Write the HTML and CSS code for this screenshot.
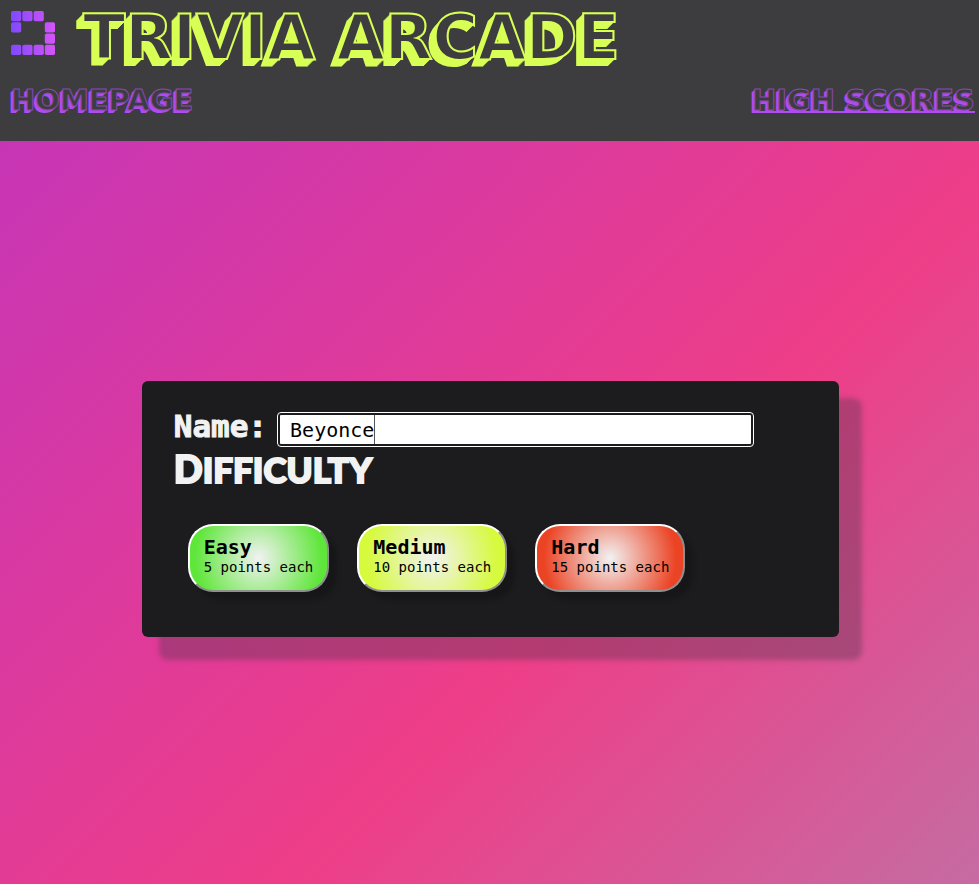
FILE: index.html
```html
<!DOCTYPE html>
<html lang="en">
<head>
<meta charset="utf-8">
<title>Trivia Arcade</title>
<link rel="stylesheet" href="styles.css">
</head>
<body>
<header class="header">
  <div class="brand">
    <svg class="logo" viewBox="0 0 44 44" aria-hidden="true">
      <defs>
        <linearGradient id="violet" gradientUnits="userSpaceOnUse" x1="0" y1="0" x2="44" y2="0">
          <stop offset="0" stop-color="#7f49ff"/>
          <stop offset="1" stop-color="#d654f8"/>
        </linearGradient>
      </defs>
      <g fill="url(#violet)">
        <rect x="0" y="0" width="10.2" height="10.2" rx="1.8"/>
        <rect x="11.3" y="0" width="10.2" height="10.2" rx="1.8"/>
        <rect x="22.6" y="0" width="10.2" height="10.2" rx="1.8"/>
        <rect x="0" y="11.3" width="10.2" height="10.2" rx="1.8"/>
        <rect x="33.8" y="11.3" width="10.2" height="10.2" rx="1.8"/>
        <rect x="33.8" y="22.6" width="10.2" height="10.2" rx="1.8"/>
        <rect x="0" y="33.8" width="10.2" height="10.2" rx="1.8"/>
        <rect x="11.3" y="33.8" width="10.2" height="10.2" rx="1.8"/>
        <rect x="22.6" y="33.8" width="10.2" height="10.2" rx="1.8"/>
        <rect x="33.8" y="33.8" width="10.2" height="10.2" rx="1.8"/>
      </g>
    </svg>
    <h1 class="title">TRIVIA ARCADE</h1>
  </div>
  <nav class="nav">
    <a class="nav-link" href="#home">HOMEPAGE</a>
    <a class="nav-link nav-link-active" href="#scores">HIGH SCORES</a>
  </nav>
</header>
<main class="main">
  <form class="card">
    <div class="field">
      <label class="label" for="name">Name:</label>
      <input class="input" id="name" type="text" value="Beyonce" autocomplete="off">
    </div>
    <h2 class="heading">Difficulty</h2>
    <div class="levels">
      <button class="level easy" type="button"><strong class="level-name">Easy</strong>5 points each</button>
      <button class="level medium" type="button"><strong class="level-name">Medium</strong>10 points each</button>
      <button class="level hard" type="button"><strong class="level-name">Hard</strong>15 points each</button>
    </div>
  </form>
</main>
</body>
</html>
```
FILE: styles.css
```css
* {
  box-sizing: border-box;
}

body {
  margin: 0;
  min-height: 100vh;
  display: flex;
  flex-direction: column;
  font-family: "DejaVu Sans Mono", monospace;
}

.header {
  background: #3d3d3f;
  padding: 8px 4px 25px 11px;
}

.brand {
  display: flex;
  align-items: flex-start;
  gap: 28px;
}

.logo {
  width: 44px;
  height: 44px;
  margin-top: 3px;
}

.title {
  margin: 0;
  color: #3d3d3f;
  font: bold 62px/60px "DejaVu Sans", sans-serif;
  white-space: nowrap;
  -webkit-text-stroke: 2px #d8ff55;
  text-shadow:
    -1px 1px #d8ff55, -2px 2px #d8ff55, -3px 3px #d8ff55,
    -4px 4px #d8ff55, -5px 5px #d8ff55, -6px 6px #d8ff55,
    -7px 7px #d8ff55;
}

.nav {
  display: flex;
  justify-content: space-between;
  margin-top: 16px;
}

.nav-link {
  color: #3d3d3f;
  font: bold 29px/32px "DejaVu Sans", sans-serif;
  text-decoration: none;
  -webkit-text-stroke: 1px #8a49b0;
  text-shadow:
    -1px 1px #b04bf0, -2px 2px #b04bf0, -3px 3px #b04bf0;
}

.nav-link-active {
  background: linear-gradient(#b04bf0, #b04bf0) 0 27px / 100% 2px no-repeat;
}

.main {
  flex: 1;
  display: flex;
  align-items: center;
  justify-content: center;
  padding: 0 0 8px 2px;
  background: linear-gradient(135deg, #c735b6, #ee3e88 60%, #c56ca2);
}

.card {
  width: 71.4%;
  padding: 32px 32px 45px;
  background: #1c1c1e;
  border-radius: 6px;
  box-shadow: 20px 20px 5px 3px rgba(92, 56, 80, 0.4);
}

.field {
  display: flex;
  align-items: flex-start;
  gap: 11px;
}

.label {
  color: #f2f2f2;
  font-size: 31px;
  font-weight: bold;
  line-height: 26px;
  -webkit-text-stroke: 1px #f2f2f2;
}

.input {
  width: 471px;
  min-width: 0;
  height: 29px;
  margin: 2px;
  padding: 2px 10px 0;
  border: 0;
  border-radius: 1px;
  outline: 1px solid #ffffff;
  outline-offset: 2px;
  color: #000000;
  font: 20px "DejaVu Sans Mono", monospace;
  background: linear-gradient(#555555, #555555) calc(10px + 7ch) 0 / 1px 100% no-repeat #ffffff;
}

.heading {
  margin: 2px 0 0;
  color: #f2f2f2;
  font: 900 35px/40px Lato, sans-serif;
  text-transform: uppercase;
  -webkit-text-stroke: 2px #f2f2f2;
}

.heading::first-letter {
  font-size: 38px;
}

.levels {
  display: flex;
  flex-wrap: wrap;
  gap: 28px;
  margin: 35px 14px 0;
}

.level {
  padding: 9px 14px 15px;
  border: 2px solid;
  border-color: #ffffff #8f8f8f #8f8f8f #ffffff;
  border-radius: 25px;
  box-shadow: 8px 8px 5px rgba(0, 0, 0, 0.2);
  color: #000000;
  font: 14px/16px "DejaVu Sans Mono", monospace;
  text-align: left;
}

.level-name {
  display: block;
  font-size: 20px;
  line-height: 24px;
}

.easy {
  background: radial-gradient(circle, #f2f2f2, #5fe63a 64px);
}

.medium {
  background: radial-gradient(circle, #f2f2f2, #d6fa3c 66px);
}

.hard {
  background: radial-gradient(circle, #f2f2f2, #eb4425 66px);
}
```
